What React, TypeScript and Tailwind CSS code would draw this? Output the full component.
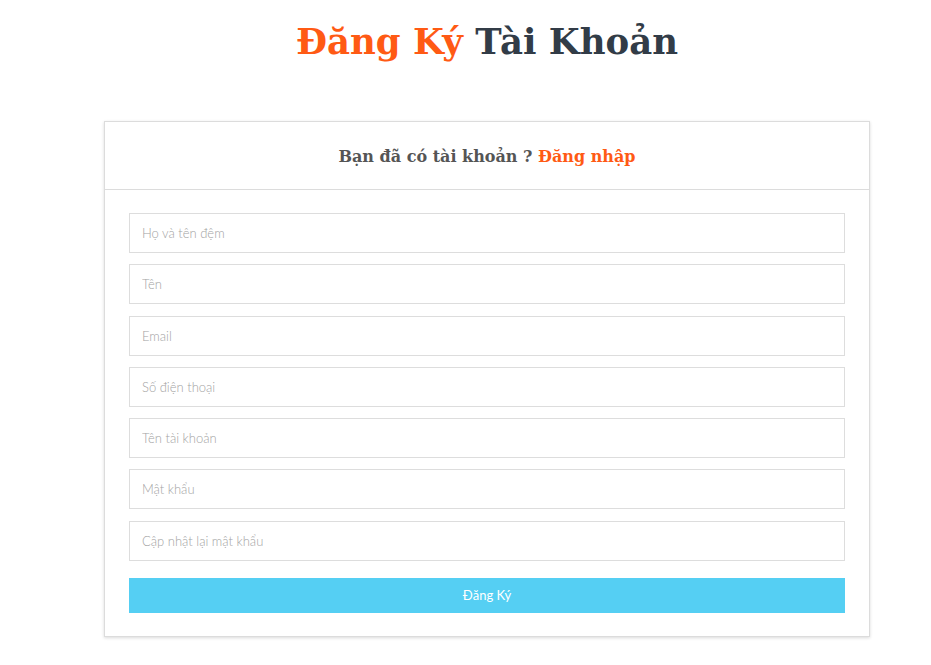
const fields = [
  'Họ và tên đệm',
  'Tên',
  'Email',
  'Số điện thoại',
  'Tên tài khoản',
  'Mật khẩu',
  'Cập nhật lại mật khẩu',
]

function App() {
  return (
    <div className="min-h-screen bg-white">
      <div className="w-[766px] ml-[104px]">
        <h1
          className="pt-[17px] text-center text-[35.5px] font-bold leading-[50px] text-[#323c47]"
          style={{ fontFamily: '"DejaVu Serif", serif' }}
        >
          <span className="text-[#ff5a14]">Đăng Ký</span> Tài Khoản
        </h1>

        <div className="mt-[54px] bg-white border border-[#dcdcdc] shadow-[0_1px_3px_rgba(0,0,0,0.15)]">
          <div
            className="h-[68px] pt-[3px] flex items-center justify-center border-b border-[#dcdcdc] text-[16px] font-bold text-[#555555]"
            style={{ fontFamily: '"DejaVu Serif", serif' }}
          >
            Bạn đã có tài khoản ?&nbsp;<span className="text-[#ff5a14]">Đăng nhập</span>
          </div>

          <form className="px-6 pt-[23px] pb-[23px] flex flex-col">
            {fields.map(f => (
              <input
                key={f}
                type={f.includes('khẩu') ? 'password' : 'text'}
                placeholder={f}
                className="h-[40px] mb-[11.3px] border border-[#dddddd] px-3 text-[13px] text-[#555] placeholder:text-[#a3a3a3] outline-none"
                style={{ fontFamily: 'Lato, sans-serif', fontWeight: 300 }}
              />
            ))}
            <button
              type="button"
              className="mt-[6px] h-[35px] bg-[#55cff3] text-white text-[13px]"
              style={{ fontFamily: 'Lato, sans-serif' }}
            >
              Đăng Ký
            </button>
          </form>
        </div>
      </div>
    </div>
  )
}

export default App
